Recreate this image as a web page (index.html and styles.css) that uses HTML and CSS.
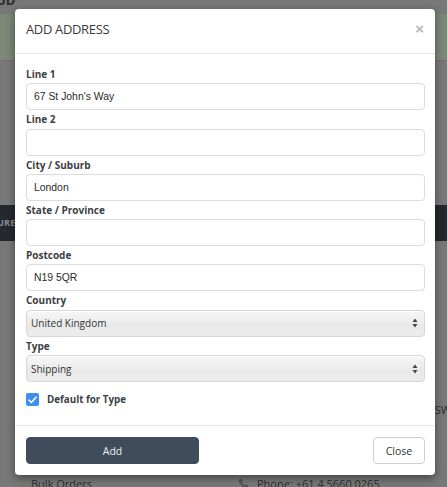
FILE: index.html
```html
<!DOCTYPE html>
<html>
<head>
<meta charset="utf-8">
<link rel="stylesheet" href="styles.css">
</head>
<body>
<div class="page">
  <div class="bg-top"><span class="bg-ud">UD</span></div>
  <div class="bg-green"></div>
  <div class="bg-gap"></div>
  <div class="bg-dark"><span class="bg-ure">URE</span></div>
  <div class="bg-mid"><span class="bg-sw">SW</span></div>
  <div class="bg-bottom">
    <span class="bg-bulk">Bulk Orders</span>
    <span class="bg-phone">
      <svg class="phone-ico" width="11" height="11" viewBox="0 0 16 16"><path d="M3 1.5 L5.5 1 L7 4.5 L5.5 6 C6.5 8 8 9.5 10 10.5 L11.5 9 L15 10.5 L14.5 13 C14 14.5 12.5 15 11 14.5 C6.5 13 3 9.5 1.5 5 C1 3.5 1.5 2 3 1.5 Z" fill="#555"/></svg>
      Phone: +61 4 5660 0265
    </span>
  </div>

  <div class="modal">
    <div class="modal-header">
      <h4 class="modal-title">ADD ADDRESS</h4>
      <span class="modal-close">×</span>
    </div>
    <div class="modal-body">
      <label class="field-label">Line 1</label>
      <div class="input">67 St John's Way</div>
      <label class="field-label">Line 2</label>
      <div class="input"></div>
      <label class="field-label">City / Suburb</label>
      <div class="input">London</div>
      <label class="field-label">State / Province</label>
      <div class="input"></div>
      <label class="field-label">Postcode</label>
      <div class="input">N19 5QR</div>
      <label class="field-label">Country</label>
      <div class="select"><span>United Kingdom</span>
        <svg class="arrows" width="6" height="10" viewBox="0 0 6 10"><path d="M0.5 4 L3 0.5 L5.5 4 Z M0.5 6 L3 9.5 L5.5 6 Z" fill="#444"/></svg>
      </div>
      <label class="field-label">Type</label>
      <div class="select"><span>Shipping</span>
        <svg class="arrows" width="6" height="10" viewBox="0 0 6 10"><path d="M0.5 4 L3 0.5 L5.5 4 Z M0.5 6 L3 9.5 L5.5 6 Z" fill="#444"/></svg>
      </div>
      <div class="check-row">
        <span class="checkbox">
          <svg width="9" height="8" viewBox="0 0 9 8"><path d="M1 4.2 L3.4 6.5 L8 1.2" fill="none" stroke="#fff" stroke-width="1.6" stroke-linecap="round" stroke-linejoin="round"/></svg>
        </span>
        <span class="check-label">Default for Type</span>
      </div>
    </div>
    <div class="modal-footer">
      <button class="btn btn-primary">Add</button>
      <button class="btn btn-default">Close</button>
    </div>
  </div>
</div>
</body>
</html>
```

FILE: styles.css
```css
* { box-sizing: border-box; }
html, body { margin: 0; padding: 0; }
body {
  width: 447px;
  height: 487px;
  overflow: hidden;
  background: #777777;
  font-family: "Open Sans", "Liberation Sans", sans-serif;
}
.page {
  position: relative;
  width: 447px;
  height: 487px;
  display: flex;
  flex-direction: column;
}
.bg-top {
  height: 14px;
  background: #787878;
  position: relative;
}
.bg-ud {
  position: absolute;
  left: -4px;
  top: -9px;
  font-size: 13px;
  font-weight: 700;
  color: #2a2a2a;
}
.bg-green {
  height: 46px;
  background: #7c8878;
  border-bottom: 1px solid #848484;
}
.bg-gap {
  height: 145px;
  background: #787878;
  border-top: 1px solid #707070;
}
.bg-dark {
  height: 36px;
  background: #24292e;
  position: relative;
}
.bg-ure {
  position: absolute;
  left: -3px;
  top: 11px;
  font-size: 9px;
  font-weight: 700;
  color: #8b9096;
  letter-spacing: 0.3px;
}
.bg-mid {
  flex: 1;
  background: #787878;
  position: relative;
}
.bg-sw {
  position: absolute;
  right: -4px;
  top: 161px;
  font-size: 11px;
  color: #2f2f2f;
}
.bg-bottom {
  height: 14px;
  background: #787878;
  position: relative;
  font-size: 11px;
  color: #2f2f2f;
}
.bg-bulk {
  position: absolute;
  left: 31px;
  top: 3px;
}
.bg-phone {
  position: absolute;
  left: 238px;
  top: 3px;
  display: flex;
  gap: 8px;
  align-items: center;
}

.modal {
  position: absolute;
  left: 15px;
  top: 9px;
  width: 420px;
  height: 466px;
  display: flex;
  flex-direction: column;
  background: #fff;
  border-radius: 4px;
  box-shadow: 0 3px 9px rgba(0,0,0,0.45);
  color: #333;
}
.modal-header {
  height: 45px;
  flex: none;
  border-bottom: 1px solid #e7e7e7;
  display: flex;
  align-items: flex-start;
  justify-content: space-between;
  padding: 11px 11px 0 11px;
}
.modal-title {
  margin: 0;
  font-size: 13px;
  line-height: 18px;
  font-weight: 400;
  color: #3a3a3a;
  letter-spacing: -0.35px;
}
.modal-close {
  font-family: "Liberation Sans", sans-serif;
  font-size: 15px;
  line-height: 15px;
  font-weight: 700;
  color: #b8b8b8;
  margin-top: 1px;
  margin-right: 0;
}
.modal-body {
  flex: 1;
  padding: 11px 10px 0 11px;
  display: flex;
  flex-direction: column;
}
.field-label {
  display: block;
  height: 18.3px;
  line-height: 18px;
  font-size: 10px;
  font-weight: 700;
  color: #3b3f44;
}
.input {
  height: 27px;
  flex: none;
  border: 1px solid #dcdcdc;
  border-radius: 4px;
  padding: 0 7px;
  font-family: "Liberation Sans", Arial, sans-serif;
  font-size: 10.4px;
  line-height: 25px;
  color: #2a2a2a;
  background: #fff;
}
.select {
  height: 27px;
  flex: none;
  border: 1px solid #d6d6d6;
  border-radius: 4px;
  padding: 0 6px 0 4px;
  font-size: 10px;
  color: #333;
  background: linear-gradient(#f7f7f7, #e9e9e9 60%, #ececec);
  display: flex;
  align-items: center;
  justify-content: space-between;
  box-shadow: inset 0 1px 0 #fff;
}
.arrows { display: block; }
.check-row {
  display: flex;
  align-items: center;
  gap: 8px;
  margin-top: 11px;
  height: 13px;
}
.checkbox {
  width: 13px;
  height: 13px;
  border-radius: 2px;
  background: #3d8ef0;
  display: flex;
  align-items: center;
  justify-content: center;
}
.check-label {
  font-size: 9.8px;
  font-weight: 700;
  color: #3b3f44;
}
.modal-footer {
  flex: none;
  height: 50px;
  border-top: 1px solid #e7e7e7;
  padding: 11px 10px 11px 11px;
  display: flex;
  justify-content: space-between;
  align-items: flex-start;
}
.btn {
  height: 27px;
  border-radius: 4px;
  font-family: "Open Sans", sans-serif;
  font-size: 10.5px;
  cursor: pointer;
}
.btn-primary {
  width: 173px;
  background: #3e4c5b;
  border: 1px solid #3e4c5b;
  color: #eef0f2;
}
.btn-default {
  width: 52px;
  background: #fff;
  border: 1px solid #cfcfcf;
  color: #333;
}
```
